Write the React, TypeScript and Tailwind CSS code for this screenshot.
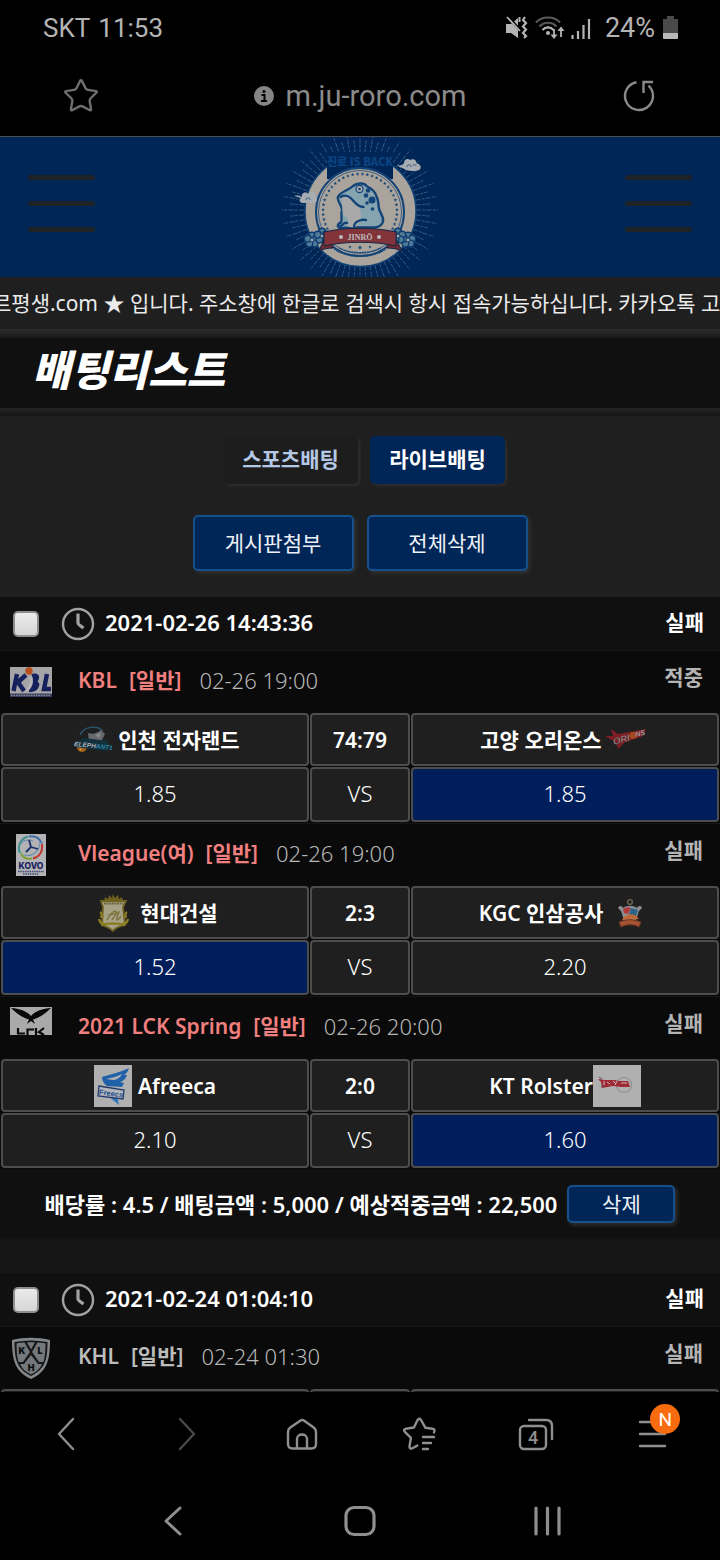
import React from "react";
import { Star } from "lucide-react";

type Game = {
  league: string;
  logo: React.ReactNode;
  time: string;
  result: string;
  muted?: boolean;
  home: React.ReactNode;
  away: React.ReactNode;
  score: string;
  odds: [string, string, string];
  pick?: 0 | 2;
};

const starPoints = (cx: number, cy: number, r: number) =>
  Array.from({ length: 10 }, (_, i) => {
    const a = -Math.PI / 2 + (i * Math.PI) / 5;
    const d = i % 2 ? r * 0.42 : r;
    return `${(cx + d * Math.cos(a)).toFixed(2)},${(cy + d * Math.sin(a)).toFixed(2)}`;
  }).join(" ");

/* ---------- status bar and browser bar ---------- */

function StatusBar() {
  return (
    <div className="flex h-14 items-center justify-between pr-[42px] pl-[43px] text-[26px] text-[#b4b4b4]">
      <div className="flex items-center gap-2 leading-8">
        <span>SKT</span>
        <span>11:53</span>
      </div>
      <div className="flex items-center gap-3 leading-8">
        <svg width="88" height="26" viewBox="0 0 88 26" fill="none" aria-hidden="true">
          <path d="M1 9h5l7-6v20l-7-5H1z" fill="#b4b4b4" />
          <path d="M2 1l13 14" stroke="#000" strokeWidth="3" />
          <path d="M2 2l13 14" stroke="#b4b4b4" strokeWidth="1.8" />
          <path d="M14.500 2v5" stroke="#b4b4b4" strokeWidth="2" />
          <path d="M20 2l-2 3 3 3-3 3.500 3 3-3 3.500 3 3-2 2" stroke="#b4b4b4" strokeWidth="2.200" />
          <path d="M31 7.500C37 .8 49 .8 55 7.500M34.500 11.500c4.500-5 12.500-5 17 0" stroke="#5a5a5a" strokeWidth="2.200" />
          <path d="M37.500 15c3-3.400 8-3.400 11 0" stroke="#b4b4b4" strokeWidth="2.200" />
          <circle cx="43" cy="18" r="2" fill="#b4b4b4" />
          <path d="M49 14v8M56 22v-8" stroke="#b4b4b4" strokeWidth="1.800" />
          <path d="M45.500 19.500h7L49 24zM52.500 16h7L56 11.500z" fill="#b4b4b4" />
          <path d="M67.500 20v4M73 16v8M78.500 10v14M84 4v20" stroke="#b4b4b4" strokeWidth="2.200" />
        </svg>
        <span className="text-[27px]">24%</span>
        <svg width="15" height="24" viewBox="0 0 15 24" className="-ml-1" aria-hidden="true">
          <path d="M4 0h7v3h4v14H0V3h4z" fill="#4a4a4a" />
          <path d="M0 17h15v5a1 1 0 0 1-1 1H1a1 1 0 0 1-1-1z" fill="#b8b8b8" />
        </svg>
      </div>
    </div>
  );
}

function AddressBar() {
  return (
    <div className="flex h-[81px] items-center justify-between border-b border-[#4c4f55] px-[61px]">
      <button aria-label="즐겨찾기" className="flex size-10 items-center justify-center">
        <Star className="size-[38px] text-[#6f6f6f]" strokeWidth={1.5} />
      </button>
      <div className="flex items-center gap-3 text-[#8b8b8b]">
        <svg width="20" height="20" viewBox="0 0 20 20" aria-hidden="true">
          <circle cx="10" cy="10" r="10" fill="#858585" />
          <circle cx="10" cy="5.500" r="1.500" fill="#000" />
          <path d="M7.500 9h3v6M7 15h6" stroke="#000" strokeWidth="2" fill="none" />
        </svg>
        <span className="text-[29px] leading-9">m.ju-roro.com</span>
      </div>
      <button aria-label="새로고침" className="flex size-10 items-center justify-center">
        <svg width="34" height="34" viewBox="0 0 34 34" fill="none" stroke="#8a8a8a" strokeWidth="2.400">
          <path d="M14.500 3.200A14 14 0 1 0 26.500 6.700" />
          <path d="M31 3H21.500v11" />
        </svg>
      </button>
    </div>
  );
}

/* ---------- site header ---------- */

function MenuButton({ label }: { label: string }) {
  return (
    <button aria-label={label} className="flex w-[67px] flex-col gap-[21px] pb-2">
      <span className="h-[5px] rounded-sm bg-[#1f2327]" />
      <span className="h-[5px] rounded-sm bg-[#1f2327]" />
      <span className="h-[5px] rounded-sm bg-[#1f2327]" />
    </button>
  );
}

function Flower({ x, y }: { x: number; y: number }) {
  return (
    <g>
      {[0, 72, 144, 216, 288].map((a) => {
        const t = (a - 90) * (Math.PI / 180);
        return <circle key={a} cx={x + 4.4 * Math.cos(t)} cy={y + 4.4 * Math.sin(t)} r="3.400" fill="#4f7a98" stroke="#0d3c70" strokeWidth="1.400" />;
      })}
      <circle cx={x} cy={y} r="2" fill="#a8a8a8" stroke="#0d3c70" />
    </g>
  );
}

function Emblem() {
  const rays = Array.from({ length: 72 }, (_, i) => {
    const a = (i * Math.PI) / 36;
    const end = i % 2 ? 70 : 78;
    return { a, end };
  });
  const ring = Array.from({ length: 34 }, (_, i) => Math.PI * 0.8 + (i * Math.PI * 1.4) / 33);
  return (
    <svg width="180" height="140" viewBox="0 7 180 140" role="img" aria-label="JINRO">
      <g stroke="#45658a" strokeWidth=".8" strokeDasharray="5 1.500 3 1">
        {rays.map(({ a, end }) => (
          <line key={a} x1={90 + 56 * Math.cos(a)} y1={80 + 56 * Math.sin(a)} x2={90 + end * Math.cos(a)} y2={80 + end * Math.sin(a)} />
        ))}
      </g>
      <circle cx="90.500" cy="81" r="55.500" fill="#aaa49d" stroke="#124477" strokeWidth="1.500" />
      <path d="M57 22h66v27H57z" fill="#002657" />
      <circle cx="90" cy="82" r="44" fill="#aaa49d" stroke="#124477" strokeWidth="2" />
      <circle cx="90" cy="82" r="41.500" fill="none" stroke="#124477" strokeWidth=".7" />
      {ring.map((a) => (
        <polygon key={a} points={starPoints(90 + 37 * Math.cos(a), 81 + 37 * Math.sin(a), 1.9)} fill="#124477" />
      ))}
      <text x="90" y="36" textAnchor="middle" fontSize="11" fontWeight="900" fill="#0c4482" fontFamily="'Noto Sans CJK KR', sans-serif">
        진로 IS BACK
      </text>
      <g stroke="#124477" strokeWidth="2.400" strokeLinejoin="round" strokeLinecap="round">
        <path d="M83 56c4-3.500 12-3.500 14 .5 5 2 8 5 9.500 10 2.500 4 1.500 8 2.500 12 1 5 5 8 4 13-1 4-4 5.500-8 6H84c-3 1-5-1-8 0-3 .5-7 1.500-8-1-.6-2.500 1.500-3.500 3-4 2-4-1-7 1-12 .8-4-4-7-4.300-13C69 62 78 61 83 56z" fill="#86a3b0" />
        <path d="M71 68c3-2 7-2 9 .5 4 4 6 7 9 9 3 6 3 15-3 19-2 1.500-5 .8-10 0 4-4 3-8-1-11-5-4-1-9-4-17.500z" fill="#a9a9aa" stroke="none" />
        <path d="M70.500 67c5-3 10 0 13 4 3 3.500 6 6 10 6M70 96.500c3-1 4-5 7-3.500M84 97c0-5 6-8 12-7" fill="none" />
      </g>
      <circle cx="89.500" cy="59" r="3.600" fill="#a9a9aa" stroke="#124477" strokeWidth="1.200" />
      <circle cx="89.500" cy="59" r="1.300" fill="#124477" />
      <g fill="#124477">
        <circle cx="98" cy="60.500" r="2.300" />
        <circle cx="96" cy="65.500" r="2.300" />
        <circle cx="102" cy="70" r="3.500" />
        <circle cx="97" cy="73" r="1.800" />
        <circle cx="102.500" cy="79" r="1.800" />
      </g>
      <polygon points={starPoints(90, 117.5, 2.5)} fill="#124477" />
      <polygon points={starPoints(80, 117, 1.7)} fill="#124477" />
      <polygon points={starPoints(100, 117, 1.7)} fill="#124477" />
      <path d="M69 118c12 6 30 6 42 0M64 119c14 10 38 10 52 0" fill="none" stroke="#124477" strokeWidth="1.200" strokeDasharray="2 .6" />
      <Flower x={42} y={110} />
      <Flower x={138} y={110} />
      <Flower x={52} y={106} />
      <Flower x={128} y={106} />
      <path d="M55 107l-6 14c4-2 9-3 14-3v-8zM125 107l7 14c-4-2-10-3-15-3v-8z" fill="#6f2a33" stroke="#102847" />
      <path d="M54 102c22-5 50-5 72 0v14c-22-5-50-5-72 0z" fill="#83343b" stroke="#102847" />
      <circle cx="71" cy="107" r="2" fill="#bcbcbc" />
      <circle cx="109" cy="107" r="2" fill="#bcbcbc" />
      <text x="90" y="110" textAnchor="middle" fontSize="8" fontWeight="700" fill="#bcbcbc" fontFamily="'Liberation Serif', serif">JINRŌ</text>
      <g fill="#a6acb2">
        <path d="M24 66c4-1 6 0 8 1-1-4 4-6 6-3 3-4 9-1 7 3 3 2 2 6-1 6H32c-3-1-3-4-1-5z" />
        <path d="M127 35c3 1 6 0 7-2 0-4 4-5 6-3 3-2 7 0 6 3 5 1 6 5 3 7-4 2-14 1-16-2-2 0-4-1-6-3z" />
      </g>
      <path d="M36 70c0-3 4-3 4 0M137 37c0-3 4-3 4 0M143 36c0-2 3-2 3 0" fill="none" stroke="#23466f" strokeWidth=".8" />
    </svg>
  );
}

/* ---------- league and team marks ---------- */

const KblLogo = () => (
  <svg width="42" height="30" viewBox="0 0 42 30" role="img" aria-label="KBL">
    <rect width="42" height="30" fill="#a5a5a7" />
    <g fill="none" stroke="#15205c" strokeWidth="4.400">
      <path d="M7 7L3.500 24M16 8l-9 8M8 15l6 9" />
      <path d="M22 9c7-2 6 4 0 6 8-1 6 8-3 8M26 7l-4 17" />
      <path d="M37 7l-3 15h7" />
    </g>
    <path d="M19 10c2 5 0 9-4 14h3c5-4 6-10 4-14z" fill="#b5b5b8" />
    <circle cx="19" cy="4" r="3.700" fill="#b94f1d" />
    <rect y="26.500" width="42" height="3.500" fill="#39415f" />
    <path d="M1 28.300h40" stroke="#9a9aa5" strokeDasharray="1.500 1" />
  </svg>
);

const KovoLogo = () => (
  <svg width="30" height="42" viewBox="0 0 30 42" role="img" aria-label="KOVO">
    <rect width="30" height="42" fill="#b3b3b5" />
    <g fill="none" strokeWidth="2">
      <path d="M4 19C1 12 5 4 12 2.500" stroke="#3f8f8d" />
      <path d="M13 2.500c6-1.500 11 2 13 7" stroke="#386ea8" />
      <path d="M26 10c1 8-3 13-9 14.500" stroke="#c0392f" />
      <path d="M16 24.500c-5 1-9-1-11-5" stroke="#7ea03a" />
      <path d="M5 9c3-3 8-4 12-2M24 7c0 5-1 8-4 11M8 21c4 1 9 0 12-3" stroke="#6d8eb0" strokeWidth="1.200" />
      <path d="M15 13l-2-7M15 13l7 2M15 13l-5 5" stroke="#1b2f6d" strokeWidth="1.800" />
    </g>
    <text x="15" y="35" textAnchor="middle" fontSize="8.500" fontWeight="800" fill="#17215e" fontFamily="Inter, sans-serif">KOVO</text>
    <path d="M2 37.500h26M7 40h16" stroke="#454c7c" strokeWidth="1.300" strokeDasharray="1.600 .7" />
  </svg>
);

const LckLogo = () => (
  <svg width="42" height="42" viewBox="0 0 42 42" role="img" aria-label="LCK">
    <rect width="42" height="28" fill="#a9a9a9" />
    <path d="M1 1c8 .5 16 3 20 8C25 4 33 1.500 41 1c-4 4-9 8-15 10.500l-3 1 2 4.500-4-3-4 3 2-4.500-3-1C10 9 5 5 1 1z" fill="#080808" />
    <path d="M8 21v5.500h7M24 22.500h-6.500V28M26 21v7M34 21l-5 4 5 3" fill="none" stroke="#080808" strokeWidth="2.200" />
  </svg>
);

const KhlLogo = () => (
  <svg width="42" height="42" viewBox="0 0 42 42" role="img" aria-label="KHL">
    <path d="M2 3c12-3 26-3 38 0 0 22-4 32-19 39C6 35 2 25 2 3z" fill="#85888b" />
    <path d="M4.500 5c11-2 22-2 33 0 0 19-3 27-16.500 34C7.500 32 4.500 24 4.500 5z" fill="#141618" />
    <path d="M6.500 6.500c2.500-.5 6-.9 8-.9L20 15l-7 10H8.500C7 20 6.500 14 6.500 6.500zM35.500 6.500c-2.500-.5-6-.9-8-.9L22 15l7 10h4.500c1.500-5 2-11 2-18.500zM17 5.500c3-.2 5-.2 8 0l-4 7zM10 27h4l7-9 7 9h4c-2 5-6 8-11 10.500C16 35 12 32 10 27z" fill="#74787b" />
    <g fill="#0d0f10" fontFamily="Inter, sans-serif" fontWeight="900" fontSize="9" textAnchor="middle">
      <text x="12" y="17">K</text>
      <text x="30" y="17">L</text>
      <text x="21" y="34">H</text>
    </g>
  </svg>
);

const ElephantsLogo = () => (
  <svg width="42" height="42" viewBox="0 0 42 42" aria-hidden="true">
    <path d="M10 16c4-9 17-10 23-4" fill="none" stroke="#2b5a73" strokeWidth="1.200" />
    <path d="M18 14c5 2 9 0 13-3l4 4-3 6 4 6-11 2-6-6z" fill="#66696e" />
    <path d="M25 16l6-2-2 5z" fill="#8a8c90" />
    <circle cx="12" cy="28" r="5" fill="#a8651d" />
    <path d="M8 27l8 1M10 32l3-8" stroke="#e0a13a" strokeWidth=".9" />
    <path d="M2 25l12-6 24 3-1 10-18-2-13-2z" fill="#12303e" />
    <text x="4" y="27" fontSize="6.500" fontWeight="900" fontStyle="italic" fill="#b0b2b4" fontFamily="'Liberation Sans', sans-serif" transform="rotate(6 4 27)">
      ELEPH<tspan fill="#2a86a5">ANTS</tspan>
    </text>
  </svg>
);

const OrionsLogo = () => (
  <svg width="48" height="42" viewBox="0 0 48 42" aria-hidden="true">
    <path d="M3 17l8 0-2-7 7 5 28-5-5 8-16 5-7 7-2-7-6-3z" fill="#7e1d23" />
    <text x="12" y="26" fontSize="9.500" fontWeight="900" fontStyle="italic" fill="#a59a9c" stroke="#4b1a1f" strokeWidth=".4" fontFamily="'Liberation Sans', sans-serif" transform="rotate(-15 12 26)">
      ORI
    </text>
    <circle cx="31" cy="16.500" r="3.600" fill="#a3491f" />
    <text x="34" y="18" fontSize="7" fontWeight="900" fontStyle="italic" fill="#a59a9c" fontFamily="'Liberation Sans', sans-serif" transform="rotate(-15 34 18)">
      NS
    </text>
  </svg>
);

const HyundaiLogo = () => (
  <svg width="42" height="42" viewBox="0 0 42 42" aria-hidden="true">
    <path d="M12 9l1-4 3 2 1-4 3 3 1-4 2 4 3-3 1 4 3-2 1 4z" fill="#6f5f1c" />
    <path d="M9 9h25l-3 6 2 18c-4 1-9 2-12 6-4-4-8-5-11-6l1-18z" fill="#a6a287" stroke="#6e6220" strokeWidth="1.800" />
    <path d="M12 11.500h19" stroke="#6f663b" strokeWidth="2" strokeDasharray="2 .6" />
    <path d="M15 28c3-6 6-9 9-9 1 3-6 4-8 4M20 28c2-3 4-7 7-8-1 3-3 6-2 8 2 0 3-3 4-4" fill="none" stroke="#7b6e36" strokeWidth="1.200" />
    <path d="M8 20c2 1 2 4 1 6M7 27c1 4 4 6 8 5M35 20c-2 1-2 4-1 6M36 27c-1 4-4 6-8 5M9 33c8-2 16-2 24 0" fill="none" stroke="#8d7d22" strokeWidth="2.400" />
  </svg>
);

const KgcLogo = () => (
  <svg width="42" height="42" viewBox="0 0 42 42" aria-hidden="true">
    <circle cx="21" cy="10" r="2.400" fill="none" stroke="#6d6552" strokeWidth="1.400" />
    <path d="M9 16c2-3 4-2 5 0 4-3 10-3 14 0 1-2 4-3 5 0l-3 3-3 9H15l-3-9z" fill="#8b8f94" />
    <path d="M14 17c3-2 6-2 8-1l-3 6-4-1z" fill="#b2393a" />
    <path d="M22 16l7 2-2 6-7-1z" fill="#2b6389" />
    <path d="M13 28c3-7 13-8 17-1z" fill="#c06a39" />
    <path d="M10 30c8-3 14-3 22 0l-2 5c-6-3-12-3-18 0z" fill="#a3532f" stroke="#6d3120" />
  </svg>
);

const FreecsLogo = () => (
  <svg width="38" height="42" viewBox="0 0 38 42" aria-hidden="true">
    <rect width="38" height="42" fill="#b0b0b0" />
    <path d="M35 3c-8 4-18 6-27 9 0 4 2 7 5 9l15 1 2-4-4-1c4-1 6-4 7-7l-3 0c3-2 4-4 5-7z" fill="#1f61a8" />
    <path d="M12 14c6-1 12-3 16-5-2 4-6 6-9 6z" fill="#b0b0b0" />
    <path d="M14 31l11 9-2-9z" fill="#3076b8" />
    <path d="M5 21l25 4-1 9-25-3z" fill="#b3b6bb" stroke="#203a6e" strokeWidth="1.300" />
    <text x="17" y="31" textAnchor="middle" fontSize="7.500" fontWeight="800" fill="#1d4c8c" transform="rotate(7 17 30)" fontFamily="'Liberation Sans', sans-serif">Freecs</text>
  </svg>
);

const RolsterLogo = () => (
  <svg width="48" height="42" viewBox="0 0 48 42" aria-hidden="true">
    <rect width="48" height="42" fill="#b0b0b0" />
    <circle cx="31" cy="20" r="7.500" fill="none" stroke="#909096" strokeWidth="1.200" />
    <path d="M5 14l7 1 10 0 4 1 9 0 2 6-9 0-8-1-11 2-1-6z" fill="#9e2a34" />
    <path d="M11 16v4M14 17l3 2M20 16l3 3M24 16l-2 4M28 18h6" stroke="#c4bcbd" strokeWidth="1" />
    <path d="M6 12l3 2M8 22l3-1" stroke="#5a5558" strokeWidth="1" />
  </svg>
);

const ClockIcon = () => (
  <svg width="34" height="34" viewBox="0 0 34 34" fill="none" stroke="#a2a2a2" aria-hidden="true">
    <circle cx="17" cy="17" r="15" strokeWidth="2.400" />
    <path d="M17 6.500v9.500c0 1.500 2 2.500 5.500 5" strokeWidth="3.200" />
  </svg>
);

/* ---------- tickets ---------- */

const firstTicket: Game[] = [
  {
    league: "KBL", logo: <KblLogo />, time: "02-26 19:00", result: "적중", score: "74:79", odds: ["1.85", "VS", "1.85"], pick: 2,
    home: <><ElephantsLogo /><span className="ml-1.5">인천 전자랜드</span></>,
    away: <><span>고양 오리온스</span><OrionsLogo /></>,
  },
  {
    league: "Vleague(여)", logo: <KovoLogo />, time: "02-26 19:00", result: "실패", score: "2:3", odds: ["1.52", "VS", "2.20"], pick: 0,
    home: <><HyundaiLogo /><span className="ml-1.5">현대건설</span></>,
    away: <><span className="mr-1.5">KGC 인삼공사</span><KgcLogo /></>,
  },
  {
    league: "2021 LCK Spring", logo: <LckLogo />, time: "02-26 20:00", result: "실패", score: "2:0", odds: ["2.10", "VS", "1.60"], pick: 2,
    home: <><FreecsLogo /><span className="ml-1.5">Afreeca</span></>,
    away: <><span>KT Rolster</span><RolsterLogo /></>,
  },
];

const secondTicket: Game[] = [
  { league: "KHL", logo: <KhlLogo />, time: "02-24 01:30", result: "실패", muted: true, score: "", odds: ["", "", ""], home: null, away: null },
];

const cell = "rounded-[4px] border-2 border-[#4d4d4d] px-0 pt-0 text-center";

function GameBlock({ game }: { game: Game }) {
  return (
    <section className="border-t border-[#151515] bg-[#0a0a0a]">
      <div className="flex h-[61px] items-center pr-[17px] pl-[10px]">
        <div className="flex w-[42px] justify-center">{game.logo}</div>
        <div className={`ml-[26px] flex flex-1 items-center gap-3 pb-1 font-semibold ${game.muted ? "text-[#bcbcbc]" : "text-[#f07f7f]"}`}>
          <span>{game.league}</span>
          <span>[일반]</span>
          <time className="ml-1.5 text-[22px] font-light text-[#b8b8b8]">{game.time}</time>
        </div>
        <span className="pb-2.5 font-semibold text-[#b4b4b4]">{game.result}</span>
      </div>
      <table className="w-full table-fixed border-separate border-spacing-px">
        <colgroup>
          <col />
          <col className="w-[100px]" />
          <col />
        </colgroup>
        <tbody>
          <tr className="h-[53px] font-semibold">
            <td className={`${cell} bg-[#1f1f1f] pb-0`}><div className="flex items-center justify-center">{game.home}</div></td>
            <td className={`${cell} bg-[#1f1f1f] pb-0`}>{game.score}</td>
            <td className={`${cell} bg-[#1f1f1f] pb-0`}><div className="flex items-center justify-center">{game.away}</div></td>
          </tr>
          <tr className="h-[55px] text-[22px] font-light">
            {game.odds.map((value, i) => (
              <td key={i} className={`${cell} pb-1 ${game.pick === i ? "bg-[#001e5c]" : "bg-[#1f1f1f]"}`}>{value}</td>
            ))}
          </tr>
        </tbody>
      </table>
    </section>
  );
}

function Ticket({ id, date, games, children }: { id: string; date: string; games: Game[]; children?: React.ReactNode }) {
  return (
    <article className="bg-[#101010]">
      <header className="flex h-[53px] items-center pr-4 pl-[13px] font-semibold">
        <input
          id={id}
          type="checkbox"
          className="size-[26px] appearance-none rounded-[5px] border-2 border-[#8d8d8d] bg-linear-to-b from-[#ebebeb] to-[#d6d6d6]"
        />
        <label htmlFor={id} className="ml-[22px] flex flex-1 items-center gap-[10px]">
          <ClockIcon />
          <span className="pb-[3px] text-[22px]">{date}</span>
        </label>
        <span className="pb-[3px]">실패</span>
      </header>
      {games.map((game) => (
        <GameBlock key={game.league} game={game} />
      ))}
      {children}
    </article>
  );
}

const blueButton = "rounded-[5px] border-2 border-[#14508a] bg-[#002657] shadow-[2px_2px_4px_#333]";

function BettingPage() {
  return (
    <main className="min-h-0 flex-1 overflow-hidden bg-[#151515] text-white">
      <div className="flex h-[140px] items-center justify-between bg-[#002657] px-7">
        <MenuButton label="메뉴" />
        <Emblem />
        <MenuButton label="내 정보" />
      </div>
      <div className="flex h-[52px] items-center overflow-hidden bg-[#1f1f1f] whitespace-nowrap text-[#ebebeb]">
        <p className="-ml-2">르평생.com ★ 입니다. 주소창에 한글로 검색시 항시 접속가능하십니다. 카카오톡 고</p>
      </div>
      <div className="h-[9px] bg-linear-to-b from-[#2d2d2d] to-[#1a1a1a]" />
      <h1 className="flex h-[70px] items-center bg-[#101010] px-8 pb-1.5 text-[42px] leading-none font-black italic">배팅리스트</h1>
      <div className="h-2 bg-linear-to-b from-[#242424] to-[#151515]" />
      <div className="flex flex-col items-center gap-[31px] bg-[#1f1f1f] pt-5 pb-[26px]">
        <nav className="flex gap-3 pl-2 font-semibold">
          <button className="h-12 w-[135px] rounded-[5px] bg-[#1d1d1d] pb-0.5 text-[#b4c8e6] shadow-[2px_2px_3px_#2e2e2e]">스포츠배팅</button>
          <button className="h-12 w-[135px] rounded-[5px] bg-[#002657] pb-0.5 shadow-[2px_2px_3px_#2e2e2e]">라이브배팅</button>
        </nav>
        <div className="flex gap-[13px] text-[#eef2f8]">
          <button className={`h-14 w-[161px] ${blueButton}`}>게시판첨부</button>
          <button className={`h-14 w-[161px] ${blueButton}`}>전체삭제</button>
        </div>
      </div>
      <div className="flex flex-col gap-[35px]">
        <Ticket id="ticket-1" date="2021-02-26 14:43:36" games={firstTicket}>
          <footer className="flex h-[69px] items-center justify-center gap-[10px] font-semibold">
            <span className="text-[22px]">배당률 : 4.5 / 배팅금액 : 5,000 / 예상적중금액 : 22,500</span>
            <button className={`h-[38px] w-[108px] font-normal text-[#eef2f8] ${blueButton}`}>삭제</button>
          </footer>
        </Ticket>
        <Ticket id="ticket-2" date="2021-02-24 01:04:10" games={secondTicket} />
      </div>
    </main>
  );
}

/* ---------- bottom bars ---------- */

const line = { fill: "none", stroke: "#8f8f8f", strokeWidth: 2.4, strokeLinecap: "round", strokeLinejoin: "round" } as const;

function Toolbar() {
  return (
    <nav className="grid h-[84px] grid-cols-6 place-items-center px-2">
      <button aria-label="뒤로"><svg width="40" height="40" viewBox="0 0 40 40" {...line}><path d="M26 5L12 20l14 15" /></svg></button>
      <button aria-label="앞으로"><svg width="40" height="40" viewBox="0 0 40 40" {...line} stroke="#484848"><path d="M16 5l14 15-14 15" /></svg></button>
      <button aria-label="홈">
        <svg width="40" height="40" viewBox="0 0 40 40" {...line}>
          <path d="M7 18c0-2 .5-3 2-4.200L19.500 6.500c1.200-.8 2.200-.8 3.400 0L33 13.800c1.500 1.200 2 2.200 2 4.200v12c0 3-1.500 4.500-4.500 4.500h-19C8.500 34.500 7 33 7 30z" />
          <path d="M16 34V25c0-6 10-6 10 0v9" />
        </svg>
      </button>
      <button aria-label="북마크">
        <svg width="40" height="40" viewBox="0 0 40 40" {...line}>
          <path d="M35 18.500c1-2 .5-3.500-1.500-3.700l-7-1L22 6c-.9-1.700-2.500-1.700-3.400 0l-3.700 7.500-8 1.200c-2 .3-2.400 1.800-1 3.200l6 6-1.400 8.300c-.3 2 1 3 2.800 2l5-2.600" />
          <path d="M24 23h11M24 29h8M24 35h5" />
        </svg>
      </button>
      <button aria-label="탭 4개">
        <svg width="40" height="40" viewBox="0 0 40 40" {...line}>
          <rect x="4" y="12" width="26" height="23" rx="4" />
          <path d="M13 6h17c4 0 6 2 6 6v13" />
          <text x="17" y="30" textAnchor="middle" fontSize="18" fontWeight="500" fill="#8f8f8f" stroke="none" fontFamily="Roboto, sans-serif">4</text>
        </svg>
      </button>
      <button aria-label="더보기" className="relative">
        <svg width="40" height="40" viewBox="0 0 40 40" {...line}><path d="M7 8h25M7 20h25M7 32h25" /></svg>
        <span className="absolute -top-2.5 left-[17px] flex size-[30px] items-center justify-center rounded-full bg-[#f96c0d] text-[19px] leading-none text-white">N</span>
      </button>
    </nav>
  );
}

function SystemNav() {
  return (
    <nav className="grid h-[84px] grid-cols-3 place-items-center px-20 pt-1.5">
      <button aria-label="이전"><svg width="40" height="40" viewBox="0 0 40 40" {...line} strokeWidth={3}><path d="M27 7L13 20l14 13" /></svg></button>
      <button aria-label="홈 화면"><svg width="40" height="40" viewBox="0 0 40 40" {...line} strokeWidth={3.200}><rect x="6" y="6.500" width="28" height="27" rx="8" /></svg></button>
      <button aria-label="최근 앱"><svg width="40" height="40" viewBox="0 0 40 40" {...line} strokeWidth={3.200}><path d="M9 7v26M20.500 7v26M32 7v26" /></svg></button>
    </nav>
  );
}

export default function App() {
  return (
    <div className="flex h-screen flex-col bg-black font-[Roboto,sans-serif]">
      <StatusBar />
      <AddressBar />
      <div className="flex min-h-0 flex-1 flex-col text-[21px] leading-8 font-['Noto_Sans','Noto_Sans_CJK_KR',sans-serif]">
        <BettingPage />
      </div>
      <Toolbar />
      <SystemNav />
    </div>
  );
}
